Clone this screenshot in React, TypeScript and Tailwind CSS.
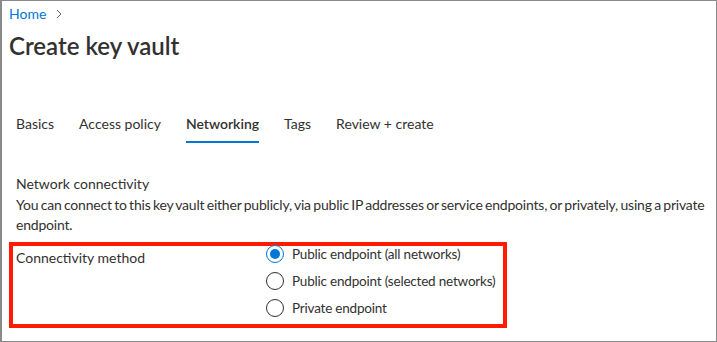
import { useState } from 'react';

const TABS = ['Basics', 'Access policy', 'Networking', 'Tags', 'Review + create'];
const OPTIONS = [
  'Public endpoint (all networks)',
  'Public endpoint (selected networks)',
  'Private endpoint',
];

function Radio({ checked }: { checked: boolean }) {
  return (
    <span
      className={`flex h-[18px] w-[18px] shrink-0 items-center justify-center rounded-full border ${
        checked ? 'border-[#0078d4]' : 'border-[#323130]'
      } bg-white`}
    >
      {checked && <span className="h-[10px] w-[10px] rounded-full bg-[#0078d4]" />}
    </span>
  );
}

export default function App() {
  const [selected, setSelected] = useState(0);

  return (
    <div
      className="h-[342px] w-[717px] overflow-hidden border border-l-2 border-[#8a8a8a] bg-white text-[#323130]"
      style={{ fontFamily: 'Lato, "Noto Sans", sans-serif' }}
    >
      {/* Breadcrumb + title */}
      <div className="px-[7px] pt-[3px]">
        <div className="flex items-center gap-[8px] text-[14px] leading-[20px]">
          <span className="text-[#0078d4]">Home</span>
          <svg width="10" height="10" viewBox="0 0 10 10" className="text-[#605e5c]">
            <path d="M3 1l4 4-4 4" fill="none" stroke="currentColor" strokeWidth="1" />
          </svg>
        </div>
        <h1 className="mt-[6px] text-[24px] font-semibold leading-[32px]">Create key vault</h1>
      </div>

      {/* Tabs */}
      <div className="mt-[52px] flex gap-[25px] px-[14px] text-[14px]">
        {TABS.map((tab) => (
          <div key={tab} className="flex flex-col">
            <span className={`leading-[20px] ${tab === 'Networking' ? 'font-semibold' : ''}`}>
              {tab}
            </span>
            <span
              className={`mt-[7px] h-[2px] ${tab === 'Networking' ? 'bg-[#0078d4]' : 'bg-transparent'}`}
            />
          </div>
        ))}
      </div>

      {/* Network connectivity */}
      <div className="mt-[31px] px-[14px] text-[14px] leading-[20px]">
        <p>Network connectivity</p>
        <p className="mt-[1px] w-[690px] tracking-[-0.2px] [word-spacing:-1px]">
          You can connect to this key vault either publicly, via public IP addresses or service
          endpoints, or privately, using a private endpoint.
        </p>
      </div>

      {/* Connectivity method */}
      <div className="ml-[7px] mt-[7px] flex h-[86px] w-[498px] border-4 border-[#ff1a00] text-[14px]">
        <div className="w-[253px] shrink-0 pl-[3px] pt-[2px] leading-[20px]">Connectivity method</div>
        <div className="-mt-[1px] flex flex-col gap-[9px]">
          {OPTIONS.map((opt, i) => (
            <button
              key={opt}
              type="button"
              onClick={() => setSelected(i)}
              className="flex h-[18px] items-center gap-[8px] whitespace-nowrap text-left leading-[20px]"
            >
              <Radio checked={selected === i} />
              <span className="text-[13.5px] tracking-[-0.2px]">{opt}</span>
            </button>
          ))}
        </div>
      </div>
    </div>
  );
}
